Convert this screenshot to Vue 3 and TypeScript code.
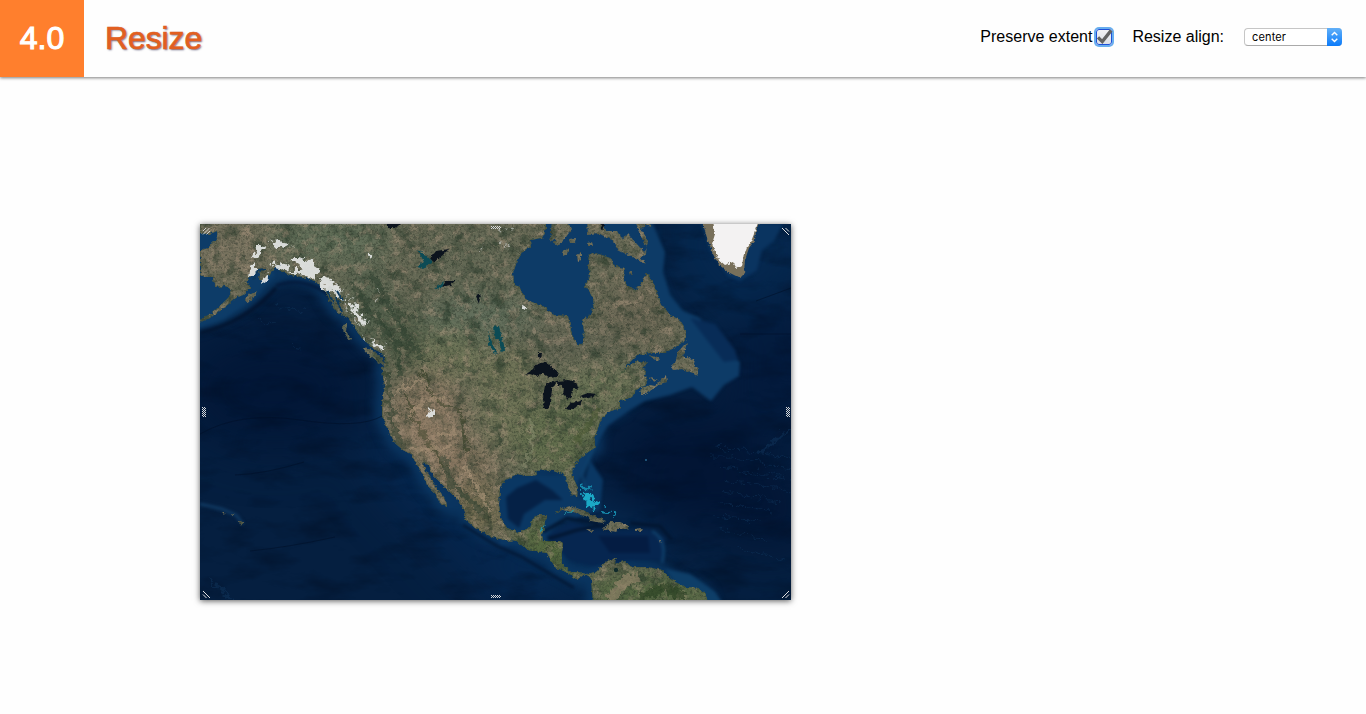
<script setup lang="ts">
import { ref } from 'vue'

const preserveExtent = ref(true)
const align = ref('center')

const mainland =
  'M200 220L200 233L210 234L217 231L218 239L212 243L208 248L200 250V275L206 277L212 277L216 287L225 286L232 290L229 297L222 304L212 313L199 320V323L215 315L226 306L236 298L243 295L250 288L249 284L246 281L258 269L260 273L259 281L268 278L274 268L281 264L279 270L290 275L308 278L318 283L325 291L330 302L338 313L348 318L352 323L358 333L364 340L374 349L382 353L388 366L382 368L384 385L382 404L382 416L388 430L395 443L403 450L412 455L417 465L423 475L427 485L435 493L440 503L447 507L446 501L438 490L432 480L426 472L423 463L429 465L433 475L445 487L455 497L463 508L466 520L475 528L492 537L507 541L515 540L528 550L547 553L555 567L568 573L577 579L582 575L587 575L591 580L593 602H708L705 593L698 588L685 587L675 582L667 575L662 570L648 567L632 567L624 561L615 564L616 558L609 560L602 565L595 572L587 574L578 572L571 572L562 565L562 552L563 543L558 541L543 541L542 535L545 522L548 515L538 515L532 520L530 528L518 532L507 528L501 518L499 505L500 488L505 480L517 474L528 476L537 475L536 471L545 470L555 471L558 473L562 472L566 477L568 487L572 495L577 497L578 488L573 477L572 470L578 460L588 452L596 447L594 438L598 429L600 421L608 412L620 408L620 401L632 397L636 390L644 386L648 382L645 376L646 370L641 369L648 363L638 361L628 366L622 373L627 365L637 355L650 353L665 353L677 346L686 340L686 330L680 320L670 315L662 305L657 293L652 280L646 273L643 281L635 291L627 285L623 276L625 268L615 266L610 258L602 255L595 253L589 255L588 263L590 276L585 286L592 295L594 305L590 315L582 320L584 331L583 343L578 345L572 335L570 325L568 316L555 315L542 306L527 300L522 293L520 287L514 285L513 273L517 261L523 251L532 246L531 240L542 238L546 230V220Z'

const islands =
  'M552 220H568L571 230L564 240L558 246L554 243L556 238L549 242L551 233Z M569 239L576 238L575 243L570 243Z M562 252L569 248L567 254L563 256Z M577 255L581 253L581 260L578 262Z M587 220H603L606 231L617 231L622 238L628 234L636 243L645 253L647 247L640 235L635 220H652L651 227L645 224L641 229L648 240L647 246L646 254L639 258L646 262L645 264L634 258L618 250L612 240L600 234L588 235Z M587 243L592 242L593 246L588 246Z M629 272L632 271L632 274L630 275Z M684 345L687 343L683 356L688 358L695 360L694 365L698 369L698 376L695 375L691 371L687 372L682 369L673 370L671 367L675 363L678 352Z M649 355L660 359L658 361L651 358Z M640 395L641 388L650 385L655 386L666 375L667 382L660 384L647 393L642 396Z M651 377L658 380L656 381L650 379Z M363 348L372 350L380 356L388 365L385 367L376 361L369 355Z M342 325L347 324L346 331L351 339L349 340L344 332Z M247 296L257 291L253 299L247 302L245 299Z M555 514L562 508L571 506L582 510L592 515L606 521L603 523L591 521L588 517L576 513L564 510Z M603 530L610 522L620 522L629 526L627 529L618 529L616 532L605 530Z M635 529L643 528L642 531L635 531Z M586 529L593 530L591 532Z M239 521L244 522L241 526Z M231 514L234 515L232 516Z M222 512L225 512L224 514Z M659 540L660 543L661 541Z'

const snow = [
  'M253 254Q258 246 267 244L264 251L254 257Z',
  'M270 241L280 239L292 246L286 249L273 246Z',
  'M272 267L280 262L290 267L284 271Z',
  'M288 257L299 257L315 264L319 275L310 277L297 274L288 270L304 270Z',
  'M319 277L334 281L340 292L349 304L344 300L330 291L323 290Z',
  'M352 302L360 312L366 325L361 326L354 311Z',
  'M366 248L372 257L370 260L366 255Z',
  'M371 340L384 346L386 352L374 347Z',
  'M250 269L256 262L256 274L249 278Z',
  'M262 278L268 274L266 280L261 283Z',
  'M428 409L432 410L432 416L427 418Z',
  'M521 305L527 306L525 313L522 311Z',
]

const lakes = [
  'M525 375L532 370L537 364L546 362L550 366L558 372L557 377L550 378L543 373L536 376L530 374Z',
  'M545 385L552 381L556 382L552 389L551 402L548 409L544 408L543 398Z',
  'M556 381L568 380L576 382L579 390L573 388L572 397L568 399L563 394L564 388L559 385Z',
  'M565 408L572 403L583 400L580 405L569 410Z',
  'M580 396L588 393L597 394L593 397L583 399Z',
  'M538 353L542 353L541 358L538 357Z',
  'M388 223L400 224L396 228L388 228Z',
  'M430 259L436 251L449 249L444 254L434 262Z',
  'M442 287L446 281L455 281L450 285Z',
  'M476 296L481 294L479 303Z',
  'M600 224L605 224L603 231Z',
]

const teal = [
  'M416 267L424 262L418 250L428 257L432 262L423 269Z',
  'M493 327L499 326L502 338L505 350L502 352L499 341L494 335Z',
  'M488 330L491 342L497 352L495 354L489 344Z',
  'M434 289L444 281L442 288Z',
]
</script>

<template>
  <div class="page">
    <header class="header">
      <div class="version">4.0</div>
      <h1 class="title">Resize</h1>
      <div class="controls">
        <span class="label">Preserve extent</span>
        <button class="check" role="checkbox" :aria-checked="preserveExtent" @click="preserveExtent = !preserveExtent">
          <svg v-if="preserveExtent" width="20" height="20" viewBox="0 0 20 20">
            <path d="M4 10.4L8.3 14.6L17.2 3.4" />
          </svg>
        </button>
        <span class="label align-label">Resize align:</span>
        <button class="select">
          <span class="value">{{ align }}</span>
          <span class="arrows">
            <svg width="15" height="18" viewBox="0 0 15 18">
              <path d="M4.7 7.3L7.5 4.5L10.3 7.3M4.7 10.7L7.5 13.5L10.3 10.7" />
            </svg>
          </span>
        </button>
      </div>
    </header>

    <main class="map">
      <svg width="591" height="376" viewBox="200 224 591 376" color-interpolation-filters="sRGB">
        <defs>
          <clipPath id="land-clip">
            <path :d="mainland" />
            <path :d="islands" />
          </clipPath>
          <filter id="b2" x="-20%" y="-20%" width="140%" height="140%"><feGaussianBlur stdDeviation="1.8" /></filter>
          <filter id="b5" x="-30%" y="-30%" width="160%" height="160%"><feGaussianBlur stdDeviation="5" /></filter>
          <filter id="b12" x="-50%" y="-50%" width="200%" height="200%"><feGaussianBlur stdDeviation="12" /></filter>
          <filter id="b25" x="-50%" y="-50%" width="200%" height="200%"><feGaussianBlur stdDeviation="25" /></filter>
          <filter id="rough" x="-5%" y="-5%" width="110%" height="110%">
            <feTurbulence type="fractalNoise" baseFrequency="0.3" numOctaves="2" seed="8" />
            <feDisplacementMap in="SourceGraphic" scale="4" xChannelSelector="R" yChannelSelector="G" />
            <feGaussianBlur stdDeviation="0.35" />
          </filter>
          <filter id="rougher" x="-20%" y="-20%" width="140%" height="140%">
            <feTurbulence type="fractalNoise" baseFrequency="0.13" numOctaves="4" seed="21" />
            <feDisplacementMap in="SourceGraphic" scale="13" xChannelSelector="R" yChannelSelector="G" />
            <feGaussianBlur stdDeviation="0.7" />
          </filter>
          <filter id="dark-grain" x="0" y="0" width="100%" height="100%">
            <feTurbulence type="fractalNoise" baseFrequency="0.075" numOctaves="5" seed="4" />
            <feColorMatrix values="0 0 0 0 0.16  0 0 0 0 0.23  0 0 0 0 0.17  3.2 0 0 0 -1.55" />
          </filter>
          <filter id="light-grain" x="0" y="0" width="100%" height="100%">
            <feTurbulence type="fractalNoise" baseFrequency="0.11" numOctaves="5" seed="13" />
            <feColorMatrix values="0 0 0 0 0.72  0 0 0 0 0.62  0 0 0 0 0.53  0 3.4 0 0 -1.65" />
          </filter>
          <filter id="fine-grain" x="0" y="0" width="100%" height="100%">
            <feTurbulence type="fractalNoise" baseFrequency="0.42" numOctaves="2" seed="31" />
            <feColorMatrix values="0 0 0 0 0.13  0 0 0 0 0.17  0 0 0 0 0.13  0 0 3 0 -1.3" />
          </filter>
          <filter id="sea-grain" x="0" y="0" width="100%" height="100%">
            <feTurbulence type="fractalNoise" baseFrequency="0.02 0.05" numOctaves="5" seed="6" />
            <feColorMatrix values="0 0 0 0 0  0 0 0 0 0.05  0 0 0 0 0.13  2.4 0 0 0 -1.1" />
          </filter>
          <radialGradient id="warm"><stop offset="0" stop-color="#a88b70" /><stop offset="1" stop-color="#a88b70" stop-opacity="0" /></radialGradient>
        </defs>

        <rect x="200" y="224" width="591" height="376" fill="#051f40" />
        <g filter="url(#b25)">
          <ellipse cx="275" cy="390" rx="95" ry="60" fill="#021737" />
          <ellipse cx="690" cy="470" rx="80" ry="60" fill="#021534" />
          <ellipse cx="775" cy="370" rx="50" ry="65" fill="#031a3c" />
          <ellipse cx="770" cy="510" rx="40" ry="40" fill="#021534" />
          <ellipse cx="590" cy="545" rx="75" ry="35" fill="#072d55" />
          <path d="M645 200H820V280L740 320L690 310Z" fill="#05284f" />
          <path d="M380 400L500 540L590 610H500L370 470Z" fill="#052750" />
        </g>
        <rect x="200" y="224" width="591" height="376" filter="url(#sea-grain)" opacity=".45" />

        <g filter="url(#b5)">
          <path :d="mainland" fill="none" stroke="#0a3560" stroke-width="14" />
          <path d="M195 225H310L338 300L300 279L275 286L248 310L222 324L195 333Z" fill="#0b3660" />
          <path d="M215 230H240L262 296L205 326Z" fill="#0d3c69" />
        </g>
        <g filter="url(#b2)">
          <path d="M200 333Q246 322 276 288" fill="none" stroke="#02112a" stroke-width="4" opacity=".8" />
          <path d="M276 286Q300 276 325 292L348 315" fill="none" stroke="#041a3b" stroke-width="3" />
          <path d="M195 225H250L275 275L250 300L225 318L195 329Z" fill="#0d3c68" />
          <path d="M500 220H651L665 252L663 272L670 295L683 311L700 318L710 332L722 350L740 362L739 376L724 385L711 401L692 387L670 395L645 401L628 411L607 426L590 455L570 500H560L570 430L570 350L500 310Z" fill="#0d3b67" />
          <path d="M690 318L715 324L735 350L738 360L724 362Z" fill="#082c57" />
          <path d="M700 220L710 250L728 276L740 281L757 270L762 250L774 241L783 224Z" fill="#0a3460" />
          <path d="M497 475H562L580 500L590 460L603 480L600 510L555 525L540 545H500Z" fill="#0a3763" />
          <path d="M506 497L517 488L536 480L552 490L563 500L545 500L524 514L519 528L508 519Z" fill="#052146" />
          <path d="M546 536L570 522L611 532L648 529L665 538L662 560L633 560L593 566L569 560Z" fill="#062650" />
          <path d="M598 536H648L650 553H610Z" fill="#041c42" />
          <path d="M543 532L567 518L598 523M548 539L577 530L605 525M630 523L660 526L672 540" fill="none" stroke="#02152f" stroke-width="3" />
          <path d="M652 531Q668 540 662 563M597 440L582 475L589 505" fill="none" stroke="#10436f" stroke-width="3" opacity=".8" />
          <path d="M665 569L690 574L715 592L722 602H690Z" fill="#0e3e68" />
          <path d="M463 525L497 546L522 557L547 572L574 588" fill="none" stroke="#02142e" stroke-width="3" opacity=".8" />
          <path d="M200 504L222 509L236 515L243 524" fill="none" stroke="#164773" stroke-width="3" opacity=".65" />
        </g>
        <g fill="none" stroke="#011028" stroke-width="1" opacity=".55">
          <path d="M200 434Q240 411 300 420T382 416" />
          <path d="M235 475Q265 474 304 462" />
          <path d="M250 551Q290 547 335 537" />
          <path d="M740 334H791M756 301L791 288" />
        </g>
        <g filter="url(#rougher)" fill="none" stroke="#143c64" stroke-width="1" opacity=".4">
          <path d="M715 447Q755 450 791 459M711 457Q750 455 791 470M720 467L791 479M725 480L791 491M720 491L780 502M716 502L770 512M715 515L760 521M720 530L768 540M735 548L785 559" />
          <path d="M754 456L791 429" stroke-width="3" />
          <path d="M209 577Q218 590 235 600" stroke-width="2" />
          <path d="M278 306L305 312M258 320L275 325M292 342L300 352" />
        </g>

        <g filter="url(#rough)">
          <g clip-path="url(#land-clip)">
            <rect x="195" y="219" width="600" height="386" fill="#6b6c58" />
            <g filter="url(#b12)">
              <ellipse cx="235" cy="250" rx="45" ry="30" fill="#7a7460" />
              <ellipse cx="330" cy="240" rx="65" ry="25" fill="#63705a" />
              <ellipse cx="370" cy="310" rx="26" ry="50" fill="#586450" />
              <ellipse cx="405" cy="345" rx="22" ry="38" fill="#4e5a45" />
              <ellipse cx="470" cy="265" rx="60" ry="40" fill="#646955" />
              <ellipse cx="480" cy="320" rx="60" ry="25" fill="#616e5b" />
              <ellipse cx="450" cy="355" rx="35" ry="25" fill="#707658" />
              <ellipse cx="560" cy="345" rx="70" ry="18" fill="#656755" />
              <ellipse cx="640" cy="310" rx="40" ry="35" fill="#6b6855" />
              <ellipse cx="425" cy="415" rx="38" ry="45" fill="#857661" />
              <ellipse cx="460" cy="470" rx="35" ry="35" fill="#867660" />
              <ellipse cx="480" cy="510" rx="30" ry="28" fill="#746d52" />
              <ellipse cx="510" cy="400" rx="35" ry="55" fill="#707457" />
              <ellipse cx="560" cy="440" rx="45" ry="38" fill="#626e4d" />
              <ellipse cx="600" cy="388" rx="45" ry="22" fill="#6a7355" />
              <ellipse cx="550" cy="550" rx="34" ry="34" fill="#54683f" />
              <ellipse cx="650" cy="592" rx="70" ry="20" fill="#526740" />
            </g>
            <rect x="195" y="219" width="600" height="386" filter="url(#dark-grain)" opacity=".6" />
            <rect x="195" y="219" width="600" height="386" filter="url(#light-grain)" opacity=".42" />
            <rect x="195" y="219" width="600" height="386" filter="url(#fine-grain)" opacity=".4" />
            <g filter="url(#rougher)" fill="none">
              <path d="M350 280L372 315L398 345L400 375M370 270L398 322L425 363M386 370L392 420L400 445M442 455L452 485L480 510" stroke="#2e4030" stroke-width="5" opacity=".55" />
              <path d="M420 370L435 400L460 410L467 450M405 395L425 440L445 465" stroke="#36402a" stroke-width="3" opacity=".7" />
              <path d="M397 390L425 380M409 415L424 402L445 397M410 450L450 448M437 435L458 430M465 465L490 510" stroke="#b39b80" stroke-width="4" opacity=".5" />
              <path d="M531 420L533 445L524 468" stroke="#8b9071" stroke-width="3" opacity=".5" />
              <path d="M575 443L599 409" stroke="#46562f" stroke-width="5" opacity=".5" />
              <path d="M610 600L625 580L640 577" stroke="#96856c" stroke-width="9" opacity=".6" />
              <path d="M640 597L665 588L685 597" stroke="#263e20" stroke-width="9" opacity=".6" />
            </g>
            <ellipse cx="430" cy="430" rx="45" ry="62" fill="url(#warm)" opacity=".3" />
            <path :d="mainland" fill="none" stroke="#32472f" stroke-width="1.2" opacity=".6" />
          </g>
        </g>
        <g filter="url(#rougher)">
          <path v-for="d in snow" :key="d" :d="d" fill="#e4e6e5" opacity=".92" />
          <g fill="none" stroke="#d0d3d0" stroke-width="1.5" opacity=".6">
            <path d="M328 287L345 304L357 324L367 341L382 352" stroke-dasharray="5 3" />
            <path d="M335 285L351 298L368 323" stroke-dasharray="2 5" />
            <path d="M497 231L515 228M500 241L512 250M482 247L484 250M380 291L376 300" stroke-dasharray="3 4" />
          </g>
        </g>
        <g filter="url(#rough)">
          <path d="M702 220L707 238L712 252L718 264L728 272L740 278L744 274L745 260L749 248L755 240L756 231L760 220Z" fill="#78705b" />
          <path d="M713 220L715 234L712 244L718 259L725 265L733 262L737 269L742 266L744 253L750 244L754 234L759 220Z" fill="#f3f2f2" />
          <path v-for="d in lakes" :key="d" :d="d" fill="#0b131d" />
          <path v-for="d in teal" :key="d" :d="d" fill="#0c4b55" />
          <path d="M327 291L334 304M336 298L342 312M337 291L343 301M253 280L258 270L266 269" fill="none" stroke="#0c385b" stroke-width="2" />
        </g>
        <g filter="url(#rougher)">
          <path d="M582 493L590 494L592 501L599 504L595 508L585 505Z" fill="#1ba9c6" />
          <path d="M583 487L592 488M603 510L610 512M613 513L616 515" stroke="#1687aa" stroke-width="3" />
          <path d="M564 513L573 513M542 531L544 525" stroke="#2591a0" stroke-width="1.5" />
        </g>
        <circle cx="616" cy="570" r="2.2" fill="#112b2b" />
        <circle cx="646" cy="460" r="1" fill="#29658c" />

        <g fill="none" stroke="#d5d8da" stroke-width="1" stroke-dasharray="1 1" shape-rendering="crispEdges">
          <path d="M491 226.5H501M492 227.5H501M491 228.5H501" />
          <path d="M491 595.5H501M492 596.5H501M491 597.5H501" />
          <path d="M202.5 407V417M203.5 408V417M204.5 407V417M205.5 408V417" />
          <path d="M786.5 407V417M787.5 408V417M788.5 407V417M789.5 408V417" />
        </g>
        <g fill="none" stroke="#e2e2e2" stroke-width="1">
          <path d="M203 234.5L209.5 228M203 231L206 228M206.5 234.5L210 231" opacity=".85" />
          <path d="M782 228L789 235M785.5 228L789 231.5" />
          <path d="M203 591L210 598M203 594.5L206.5 598" />
          <path d="M782 598L789 591M785.5 598L789 594.5" />
        </g>
      </svg>
    </main>
  </div>
</template>

<style>
body {
  margin: 0;
  background: #fefefe;
}
</style>

<style scoped>
.page {
  height: 714px;
  overflow: hidden;
  font-family: 'Liberation Sans', Arial, sans-serif;
  color: #000;
}
.header {
  display: flex;
  height: 77px;
  background: #fefefe;
  box-shadow: 0 1px 3px rgba(0, 0, 0, 0.5);
}
.version {
  width: 84px;
  background: #ff7f2d;
  color: #fff;
  font-size: 32px;
  line-height: 76px;
  text-align: center;
  -webkit-text-stroke: 1.1px #fff;
}
.title {
  margin: 0 0 0 21px;
  font-size: 32px;
  font-weight: 400;
  line-height: 76px;
  letter-spacing: -0.1px;
  color: #e25f20;
  -webkit-text-stroke: 0.7px #e25f20;
  text-shadow: 1px 1px 2px rgba(40, 40, 80, 0.75);
}
.controls {
  display: flex;
  align-items: center;
  height: 74px;
  margin-left: auto;
  margin-right: 24px;
}
.label {
  font-size: 16px;
  line-height: 20px;
}
.check {
  display: block;
  box-sizing: border-box;
  width: 16px;
  height: 16px;
  margin: 0 20px 0 4px;
  padding: 0;
  border: 1px solid #1e50d8;
  border-radius: 3px;
  background: linear-gradient(#f2f2f4, #dcdfe6);
  box-shadow: 0 0 0 2px #68aeee;
}
.check svg {
  display: block;
  margin: -3px 0 0 -3px;
}
.check path {
  fill: none;
  stroke: #636363;
  stroke-width: 3.3;
}
.align-label {
  margin-right: 20px;
}
.select {
  display: flex;
  box-sizing: border-box;
  width: 98px;
  height: 18px;
  padding: 0;
  border: 1px solid #c6c6c6;
  border-bottom-color: #aaa;
  border-right: 0;
  border-radius: 4px;
  background: #fff;
  color: #000;
}
.value {
  flex: 1;
  padding-left: 7px;
  font: 11px/17px Inter, 'Liberation Sans', sans-serif;
  letter-spacing: 0.15px;
  text-align: left;
}
.arrows {
  width: 15px;
  height: 18px;
  margin-top: -1px;
  border-radius: 0 4px 4px 0;
  background: linear-gradient(#62b0f8, #0b7bfa);
}
.arrows svg {
  display: block;
}
.arrows path {
  fill: none;
  stroke: #fff;
  stroke-width: 1.4;
}
.map {
  width: 591px;
  height: 376px;
  margin: 147px 0 0 200px;
  box-shadow: 0 1px 6px rgba(0, 0, 0, 0.65);
}
.map > svg {
  display: block;
}
</style>
